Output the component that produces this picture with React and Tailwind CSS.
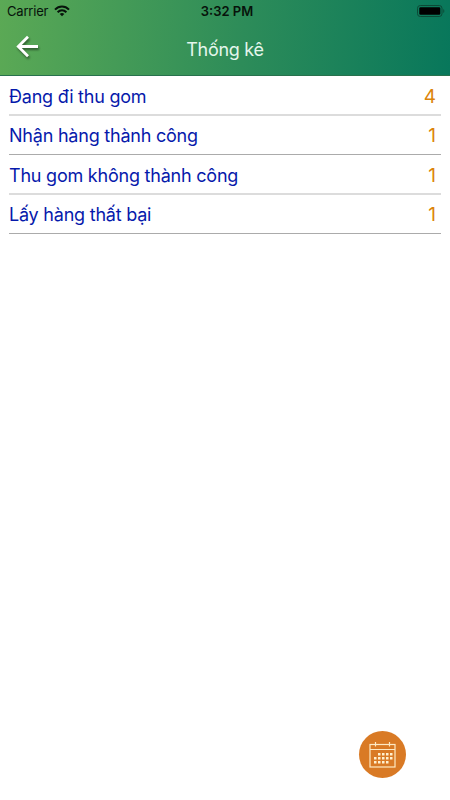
import clsx from 'clsx';

const STATS = [
  { label: 'Đang đi thu gom', count: 4, border: 'h-10 pt-[3px] border-b-2 border-[#dcdcdc]' },
  { label: 'Nhận hàng thành công', count: 1, border: 'h-[39px] pt-px border-b border-[#ababab]' },
  { label: 'Thu gom không thành công', count: 1, border: 'h-10 pt-[3px] border-b-2 border-[#dcdcdc]' },
  { label: 'Lấy hàng thất bại', count: 1, border: 'h-[39px] pt-px border-b border-[#ababab]' },
];

const CALENDAR_DOTS = [
  [9, 12], [13, 12], [17, 12], [21, 12],
  [5, 16], [9, 16], [13, 16], [17, 16], [21, 16],
  [5, 20], [9, 20], [13, 20], [17, 20],
];

function WifiIcon() {
  return (
    <svg className="w-4 h-3" viewBox="0 0 16 12" fill="none" stroke="#07130b" strokeWidth="2">
      <path d="M1 4.6C5 .4 11 .4 15 4.6" />
      <path d="M3.6 7.2c2.6-2.5 6.2-2.5 8.8 0" />
      <path d="M8 11.2 5.7 8.9c1.4-1.2 3.2-1.2 4.6 0z" fill="#07130b" stroke="none" />
    </svg>
  );
}

function BatteryIcon() {
  return (
    <svg className="w-7 h-3" viewBox="0 0 28 12" fill="none">
      <rect x="0.5" y="0.5" width="24.5" height="11" rx="2.8" stroke="#0d4936" />
      <rect x="2.3" y="2.2" width="21" height="7.6" rx="1.2" fill="#000" />
      <path d="M26.3 4v4c1.4-.5 1.4-3.5 0-4z" fill="#0d4936" />
    </svg>
  );
}

function StatusBar() {
  return (
    <div className="grid grid-cols-3 items-center h-[22px] pl-[7px] pr-[5px] text-[#07130b]">
      <div className="flex items-center gap-[6px]">
        <span className="text-[13px] leading-none tracking-[-0.2px]">Carrier</span>
        <WifiIcon />
      </div>
      <span className="pl-[2px] text-center text-[13px] font-semibold leading-none">3:32 PM</span>
      <div className="flex justify-end">
        <BatteryIcon />
      </div>
    </div>
  );
}

function Header() {
  return (
    <header className="h-[76px] border-b border-[#28714d] bg-[linear-gradient(93deg,#5ba955_0%,#2d8c59_54%,#08775b_100%)]">
      <StatusBar />
      <div className="grid grid-cols-3 h-[53px] px-4">
        <button className="w-6 h-6 mt-[13px]" aria-label="Quay lại">
          <svg
            className="w-6 h-6 drop-shadow-[1px_2px_1px_rgba(0,0,0,0.45)]"
            viewBox="0 0 24 24"
            fill="none"
            stroke="#fff"
            strokeWidth="2.8"
          >
            <path d="M22 11.5H2.5M12 1.8 2.3 11.5l9.7 9.7" />
          </svg>
        </button>
        <h1 className="pt-[14px] text-center text-[18px] leading-7 tracking-[-0.3px] text-[#e4f6ec] whitespace-nowrap">Thống kê</h1>
      </div>
    </header>
  );
}

function StatRow({ label, count, border }) {
  return (
    <li className={clsx('flex items-center justify-between pr-[5px]', border)}>
      <span className="text-[18px] leading-7 tracking-[-0.22px] text-[#0619ab]">{label}</span>
      <span className="text-[19px] leading-7 text-[#dc8409]">{count}</span>
    </li>
  );
}

function CalendarButton() {
  return (
    <button
      className="flex items-center justify-center w-[47px] h-[47px] rounded-full bg-[#d97a25]"
      aria-label="Chọn ngày"
    >
      <svg className="w-[27px] h-[27px]" viewBox="0 0 27 27" fill="none" stroke="#fde9c4" strokeWidth="1.2">
        <rect x="1" y="3.5" width="25" height="22.5" />
        <path d="M1 8.5h25M6.5 1v4.5M20.5 1v4.5" />
        {CALENDAR_DOTS.map(([x, y]) => (
          <rect key={`${x}-${y}`} x={x} y={y} width="2.5" height="2.5" fill="#fff0cf" stroke="none" />
        ))}
      </svg>
    </button>
  );
}

export default function App() {
  return (
    <div className="flex flex-col w-[450px] h-[800px] bg-white font-['Inter','Liberation_Sans',sans-serif]">
      <Header />
      <ul className="flex-1 px-[9px]">
        {STATS.map((stat) => (
          <StatRow key={stat.label} {...stat} />
        ))}
      </ul>
      <div className="flex justify-end pr-[44.5px] pb-[22px]">
        <CalendarButton />
      </div>
    </div>
  );
}
